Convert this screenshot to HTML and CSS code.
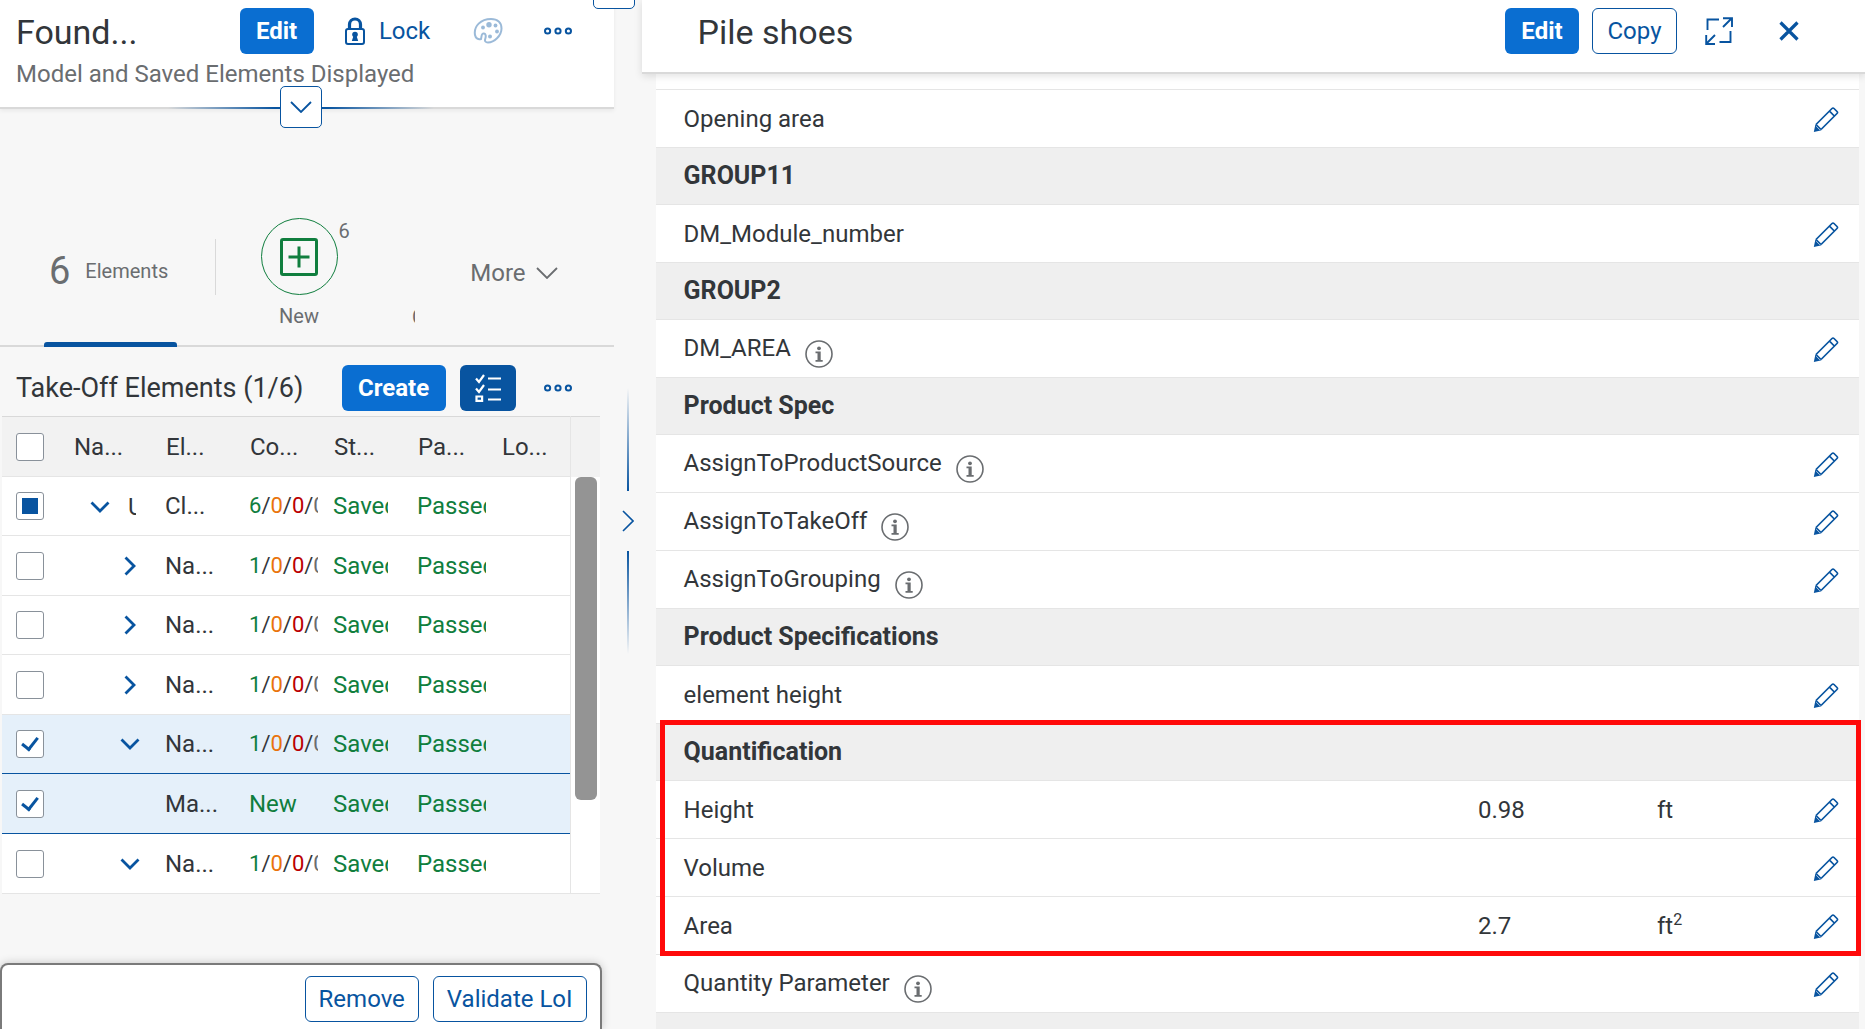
FILE: index.html
```
<!DOCTYPE html>
<html lang="en">
<head>
    <meta charset="UTF-8">
    <meta name="viewport" content="width=device-width, initial-scale=1.0">
    <title>Take-Off Elements</title>
    <link rel="stylesheet" href="styles.css">
</head>
<body>
    <svg class="sprite" aria-hidden="true">
        <symbol id="pencil" viewBox="0 0 26 26">
            <path d="M3 17.5 19 1.5q1-1 2 0L24 4.500q1 1 0 2L8 22.500M16.500 4.200l4.800 4.800M3 17.500l5 5" fill="none" stroke="currentColor" stroke-width="1.700"/>
            <path d="M2.500 17 .8 25l8-1.800-2.300-.4-3-3z" fill="currentColor"/>
        </symbol>
        <symbol id="info" viewBox="0 0 28 28">
            <circle cx="14" cy="14" r="13" fill="none" stroke="currentColor" stroke-width="1.600"/>
            <circle cx="14" cy="8.300" r="1.900" fill="currentColor"/>
            <path d="M10.500 11.500h5.200v8.500h2v1.800h-7.200V20h2v-6.700h-2z" fill="currentColor"/>
        </symbol>
        <symbol id="dots" viewBox="0 0 28 10">
            <g fill="none" stroke="currentColor" stroke-width="2"><circle cx="3.600" cy="5" r="2.600"/><circle cx="14" cy="5" r="2.600"/><circle cx="24.400" cy="5" r="2.600"/></g>
        </symbol>
        <symbol id="down" viewBox="0 0 22 12">
            <path d="m1 1 10 10L21 1" fill="none" stroke="currentColor" stroke-width="1.800"/>
        </symbol>
        <symbol id="open" viewBox="0 0 20 12">
            <path d="m1.500 1.500 8.500 8.500 8.500-8.500" fill="none" stroke="currentColor" stroke-width="2.800"/>
        </symbol>
        <symbol id="closed" viewBox="0 0 12 20">
            <path d="m1.500 1.500 8.500 8.500-8.500 8.500" fill="none" stroke="currentColor" stroke-width="2.800"/>
        </symbol>
    </svg>

    <div class="app">
        <main class="elements">
            <header class="elements-header">
                <div class="title-row">
                    <h1 class="title">Found...</h1>
                    <button type="button" class="btn primary">Edit</button>
                    <button type="button" class="btn plain lock">
                        <svg width="20" height="28" viewBox="0 0 20 28"><path d="M4.500 12V7.500a5.500 5.500 0 0 1 11 0V12" fill="none" stroke="currentColor" stroke-width="3.200"/><rect x="1" y="12" width="18" height="15" rx="2" fill="none" stroke="currentColor" stroke-width="2"/><circle cx="10" cy="17.500" r="2.800" fill="currentColor"/><path d="M8.800 18h2.400l2 6H6.800z" fill="currentColor"/></svg>
                        Lock
                    </button>
                    <button type="button" class="btn plain palette" aria-label="Colors" disabled>
                        <svg width="30" height="28" viewBox="0 0 30 28"><path d="M2 18C.5 9 8 2 18 2c6.500 0 10.500 3.500 10.500 9.500C28.500 19 21 25.500 15 25.500c-2.500 0-3.500-1.500-2.800-3.500 1-2.800.6-5.200-1.200-5.500-2.600-.4-2.200 2-3 5.500C5.500 23 2.600 21.500 2 18z" fill="none" stroke="currentColor" stroke-width="2"/><g fill="currentColor"><circle cx="10" cy="10.500" r="1.900"/><circle cx="16" cy="7.800" r="2.700"/><circle cx="22.500" cy="8.500" r="1.900"/><circle cx="24" cy="14.500" r="1.900"/><circle cx="17" cy="19.500" r="2"/></g></svg>
                    </button>
                    <button type="button" class="btn plain more" aria-label="More actions"><svg width="28" height="10"><use href="#dots"/></svg></button>
                </div>
                <p class="subtitle">Model and Saved Elements Displayed</p>
                <button type="button" class="expand" aria-label="Expand header"><svg width="22" height="12"><use href="#down"/></svg></button>
            </header>

            <nav class="tabs">
                <button type="button" class="tab total selected"><span class="number">6</span>Elements</button>
                <button type="button" class="tab new">
                    <span class="circle">
                        <svg width="38" height="38" viewBox="0 0 38 38"><rect x="1.500" y="1.500" width="35" height="35" rx="1.500" fill="none" stroke="currentColor" stroke-width="3"/><path d="M19 8.500v21M8.500 19h21" stroke="currentColor" stroke-width="3"/></svg>
                        <span class="count">6</span>
                    </span>
                    New
                </button>
                <button type="button" class="tab cut">Changed</button>
                <button type="button" class="tab overflow">More <svg width="22" height="12"><use href="#down"/></svg></button>
            </nav>

            <div class="toolbar">
                <h2 class="toolbar-title">Take-Off Elements (1/6)</h2>
                <button type="button" class="btn primary">Create</button>
                <button type="button" class="btn toggle" aria-label="Multi selection">
                    <svg width="26" height="28" viewBox="0 0 26 28"><g fill="none" stroke="currentColor" stroke-width="2.200"><path d="m1 4.500 3 3.500L9 1M1 14.500 4 18l5-7M13 4.500h13M13 15.500h13M13 25.500h13"/><path d="M1.500 22.500h5.600v4.400H1.500z"/></g></svg>
                </button>
                <button type="button" class="btn plain more" aria-label="More actions"><svg width="28" height="10"><use href="#dots"/></svg></button>
            </div>

            <div class="grid">
                <table class="tree">
                    <colgroup><col class="col-check"><col class="col-name"><col class="col-data"><col class="col-data"><col class="col-data"><col class="col-data"><col></colgroup>
                    <thead>
                        <tr><th class="check"><input type="checkbox" class="box" aria-label="Select all"></th><th>Na...</th><th>El...</th><th>Co...</th><th>St...</th><th>Pa...</th><th>Lo...</th></tr>
                    </thead>
                    <tbody>
                        <tr>
                            <td class="check"><input type="checkbox" class="box partial" aria-label="Select row"></td>
                            <td class="name root"><svg width="20" height="12"><use href="#open"/></svg><span class="clip">U</span></td>
                            <td>Cl...</td>
                            <td><span class="counts"><b class="good">6</b>/<b class="warn">0</b>/<b class="bad">0</b>/<b class="none">0</b></span></td>
                            <td><span class="saved">Saved</span></td><td><span class="passed">Passed</span></td><td></td>
                        </tr>
                        <tr>
                            <td class="check"><input type="checkbox" class="box" aria-label="Select row"></td>
                            <td class="name"><svg width="12" height="20"><use href="#closed"/></svg></td>
                            <td>Na...</td>
                            <td><span class="counts"><b class="good">1</b>/<b class="warn">0</b>/<b class="bad">0</b>/<b class="none">0</b></span></td>
                            <td><span class="saved">Saved</span></td><td><span class="passed">Passed</span></td><td></td>
                        </tr>
                        <tr>
                            <td class="check"><input type="checkbox" class="box" aria-label="Select row"></td>
                            <td class="name"><svg width="12" height="20"><use href="#closed"/></svg></td>
                            <td>Na...</td>
                            <td><span class="counts"><b class="good">1</b>/<b class="warn">0</b>/<b class="bad">0</b>/<b class="none">0</b></span></td>
                            <td><span class="saved">Saved</span></td><td><span class="passed">Passed</span></td><td></td>
                        </tr>
                        <tr>
                            <td class="check"><input type="checkbox" class="box" aria-label="Select row"></td>
                            <td class="name"><svg width="12" height="20"><use href="#closed"/></svg></td>
                            <td>Na...</td>
                            <td><span class="counts"><b class="good">1</b>/<b class="warn">0</b>/<b class="bad">0</b>/<b class="none">0</b></span></td>
                            <td><span class="saved">Saved</span></td><td><span class="passed">Passed</span></td><td></td>
                        </tr>
                        <tr class="selected">
                            <td class="check"><input type="checkbox" class="box" aria-label="Select row" checked></td>
                            <td class="name"><svg width="20" height="12"><use href="#open"/></svg></td>
                            <td>Na...</td>
                            <td><span class="counts"><b class="good">1</b>/<b class="warn">0</b>/<b class="bad">0</b>/<b class="none">0</b></span></td>
                            <td><span class="saved">Saved</span></td><td><span class="passed">Passed</span></td><td></td>
                        </tr>
                        <tr class="selected">
                            <td class="check"><input type="checkbox" class="box" aria-label="Select row" checked></td>
                            <td class="name"></td>
                            <td>Ma...</td>
                            <td><span class="good">New</span></td>
                            <td><span class="saved">Saved</span></td><td><span class="passed">Passed</span></td><td></td>
                        </tr>
                        <tr>
                            <td class="check"><input type="checkbox" class="box" aria-label="Select row"></td>
                            <td class="name"><svg width="20" height="12"><use href="#open"/></svg></td>
                            <td>Na...</td>
                            <td><span class="counts"><b class="good">1</b>/<b class="warn">0</b>/<b class="bad">0</b>/<b class="none">0</b></span></td>
                            <td><span class="saved">Saved</span></td><td><span class="passed">Passed</span></td><td></td>
                        </tr>
                    </tbody>
                </table>
                <div class="scroll"><div class="thumb"></div></div>
            </div>

            <footer class="footer">
                <button type="button" class="btn outline">Remove</button>
                <button type="button" class="btn outline">Validate LoI</button>
            </footer>
        </main>

        <div class="splitter">
            <div class="line top"></div>
            <svg width="12" height="22" viewBox="0 0 12 22"><path d="m1 1 10 10L1 21" fill="none" stroke="currentColor" stroke-width="1.600"/></svg>
            <div class="line bottom"></div>
        </div>

        <aside class="details">
            <header class="details-header">
                <h2 class="title">Pile shoes</h2>
                <button type="button" class="btn primary">Edit</button>
                <button type="button" class="btn outline">Copy</button>
                <button type="button" class="btn plain full" aria-label="Full screen"><svg width="28" height="28" viewBox="0 0 28 28"><path d="M18 1.200h9V10M26.500 1.500 18 10M10 27H1.200v-9M1.500 26.500 10 18M2.500 13V2.500H14M25.500 14v11H14.500" fill="none" stroke="currentColor" stroke-width="1.900"/></svg></button>
                <button type="button" class="btn plain close" aria-label="Close"><svg width="20" height="20" viewBox="0 0 20 20"><path d="m1.500 1.500 17 17m0-17-17 17" stroke="currentColor" stroke-width="3.200"/></svg></button>
            </header>
            <table class="props">
                <colgroup><col><col class="col-value"><col class="col-unit"><col class="col-edit"></colgroup>
                <tbody>
                    <tr class="rest"><td colspan="4"></td></tr>
                    <tr><td>Opening area</td><td></td><td></td><td><button type="button" class="edit" aria-label="Edit Opening area"><svg width="26" height="26"><use href="#pencil"/></svg></button></td></tr>
                    <tr class="group"><th colspan="4">GROUP11</th></tr>
                    <tr><td>DM_Module_number</td><td></td><td></td><td><button type="button" class="edit" aria-label="Edit DM_Module_number"><svg width="26" height="26"><use href="#pencil"/></svg></button></td></tr>
                    <tr class="group"><th colspan="4">GROUP2</th></tr>
                    <tr><td>DM_AREA<svg class="info" width="28" height="28"><use href="#info"/></svg></td><td></td><td></td><td><button type="button" class="edit" aria-label="Edit DM_AREA"><svg width="26" height="26"><use href="#pencil"/></svg></button></td></tr>
                    <tr class="group"><th colspan="4">Product Spec</th></tr>
                    <tr><td>AssignToProductSource<svg class="info" width="28" height="28"><use href="#info"/></svg></td><td></td><td></td><td><button type="button" class="edit" aria-label="Edit AssignToProductSource"><svg width="26" height="26"><use href="#pencil"/></svg></button></td></tr>
                    <tr><td>AssignToTakeOff<svg class="info" width="28" height="28"><use href="#info"/></svg></td><td></td><td></td><td><button type="button" class="edit" aria-label="Edit AssignToTakeOff"><svg width="26" height="26"><use href="#pencil"/></svg></button></td></tr>
                    <tr><td>AssignToGrouping<svg class="info" width="28" height="28"><use href="#info"/></svg></td><td></td><td></td><td><button type="button" class="edit" aria-label="Edit AssignToGrouping"><svg width="26" height="26"><use href="#pencil"/></svg></button></td></tr>
                    <tr class="group"><th colspan="4">Product Specifications</th></tr>
                    <tr><td>element height</td><td></td><td></td><td><button type="button" class="edit" aria-label="Edit element height"><svg width="26" height="26"><use href="#pencil"/></svg></button></td></tr>
                </tbody>
                <tbody class="highlight">
                    <tr class="group"><th colspan="4">Quantification</th></tr>
                    <tr><td>Height</td><td>0.98</td><td>ft</td><td><button type="button" class="edit" aria-label="Edit Height"><svg width="26" height="26"><use href="#pencil"/></svg></button></td></tr>
                    <tr><td>Volume</td><td></td><td></td><td><button type="button" class="edit" aria-label="Edit Volume"><svg width="26" height="26"><use href="#pencil"/></svg></button></td></tr>
                    <tr><td>Area</td><td>2.7</td><td>ft<sup>2</sup></td><td><button type="button" class="edit" aria-label="Edit Area"><svg width="26" height="26"><use href="#pencil"/></svg></button></td></tr>
                </tbody>
                <tbody>
                    <tr><td>Quantity Parameter<svg class="info" width="28" height="28"><use href="#info"/></svg></td><td></td><td></td><td><button type="button" class="edit" aria-label="Edit Quantity Parameter"><svg width="26" height="26"><use href="#pencil"/></svg></button></td></tr>
                    <tr class="group"><th colspan="4"></th></tr>
                </tbody>
            </table>
        </aside>

        <div class="float-tab"></div>
    </div>
</body>
</html>
```
FILE: styles.css
```
* {
    box-sizing: border-box;
}
body {
    margin: 0;
    font-family: Roboto, "Noto Sans", Arial, sans-serif;
    font-size: 24px;
    line-height: 28px;
    color: #32363a;
    background-color: #f7f7f7;
}
h1, h2, p {
    margin: 0;
    font-weight: normal;
}
button {
    font-family: inherit;
    font-size: 24px;
    line-height: 28px;
    padding: 0;
    border: none;
    background: none;
    color: #0854a0;
    cursor: pointer;
}
svg {
    display: block;
    flex: none;
}
sup {
    font-size: 16px;
    line-height: 0;
}
.sprite {
    position: absolute;
    width: 0;
    height: 0;
}
.app {
    position: relative;
    display: flex;
    height: 100vh;
    overflow: hidden;
}

/* buttons */
.btn {
    display: flex;
    align-items: center;
    justify-content: center;
    height: 46px;
    padding: 0 13px;
    border: 1px solid transparent;
    border-radius: 6px;
    flex: none;
}
.primary {
    background-color: #0a6ed1;
    color: #fff;
    font-weight: bold;
}
.outline {
    background-color: #fff;
    border-color: #0854a0;
}
.toggle {
    width: 56px;
    background-color: #0854a0;
    color: #fff;
}
.plain {
    padding: 0;
}
.more {
    width: 56px;
}

/* left side */
.elements {
    display: flex;
    flex-direction: column;
    width: 32.9%;
    flex: none;
}
.elements-header {
    position: relative;
    height: 109px;
    padding: 8px 28px 0 16px;
    background-color: #fff;
    border-bottom: 2px solid #d9d9d9;
    box-shadow: 0 2px 4px rgba(0,0,0,0.06);
}
.elements-header::after {
    content: "";
    position: absolute;
    left: 168px;
    bottom: -2px;
    width: 266px;
    height: 2px;
    background: linear-gradient(to right, transparent, #0854a0 40%, #0854a0 60%, transparent);
}
.title-row {
    display: flex;
    align-items: center;
    height: 46px;
}
.title {
    flex: 1;
    padding-top: 2px;
    font-size: 34px;
    line-height: 46px;
}
.title-row .primary {
    width: 74px;
}
.lock {
    width: 120px;
    gap: 14px;
    margin-left: 14px;
}
.palette {
    width: 56px;
    margin: 0 14px 0 12px;
    opacity: 0.4;
}
.subtitle {
    margin-top: 6px;
    color: #6a6d70;
}
.expand {
    position: absolute;
    z-index: 1;
    left: 280px;
    bottom: -21px;
    width: 42px;
    height: 42px;
    display: flex;
    align-items: center;
    justify-content: center;
    background-color: #fff;
    border: 1px solid #0854a0;
    border-radius: 5px;
}

.tabs {
    display: flex;
    height: 238px;
    padding: 109px 56px 0 44px;
    border-bottom: 2px solid #d9d9d9;
}
.tab {
    display: flex;
    align-items: center;
    font-size: 20px;
    color: #6a6d70;
}
.total {
    position: relative;
    width: 133px;
    height: 129px;
    padding: 0 0 24px 5px;
    gap: 15px;
}
.total::after {
    content: "";
    position: absolute;
    left: 0;
    bottom: 0;
    width: 100%;
    height: 5px;
    background-color: #0854a0;
    border-radius: 3px 3px 0 0;
}
.number {
    font-size: 38px;
}
.new {
    flex-direction: column;
    width: 168px;
    height: 128px;
    margin-left: 38px;
    gap: 7px;
    background: linear-gradient(#d9d9d9, #d9d9d9) 0 21px / 1px 56px no-repeat;
}
.circle {
    position: relative;
    display: flex;
    align-items: center;
    justify-content: center;
    width: 77px;
    height: 77px;
    border: 1px solid #107e3e;
    border-radius: 50%;
    color: #107e3e;
}
.count {
    position: absolute;
    left: 77px;
    top: -2px;
    color: #6a6d70;
}
.cut {
    width: 3px;
    height: 28px;
    margin: 85px 0 0 29px;
    overflow: hidden;
}
.overflow {
    height: 110px;
    margin-left: auto;
    gap: 10px;
    font-size: 24px;
}

.toolbar {
    display: flex;
    align-items: center;
    height: 69px;
    padding: 12px 28px 0 16px;
    gap: 14px;
}
.toolbar .primary {
    width: 104px;
}
.toolbar .more {
    width: 28px;
    margin: 0 14px;
}
.toolbar-title {
    flex: 1;
    font-size: 27px;
    white-space: nowrap;
}

/* elements table */
.grid {
    display: flex;
    margin: 0 14px 0 2px;
    border-bottom: 1px solid #e5e5e5;
}
.tree {
    flex: 1;
    table-layout: fixed;
    border-collapse: separate;
    border-spacing: 0;
    border-right: 1px solid #e5e5e5;
    background-color: #fff;
}
.col-check {
    width: 56px;
}
.col-name {
    width: 99px;
}
.col-data {
    width: 84px;
}
.tree th, .tree td {
    height: 60px;
    padding: 0 0 0 8px;
    border-bottom: 1px solid #e5e5e5;
    text-align: left;
    font-weight: normal;
    white-space: nowrap;
}
.tree tr:nth-child(odd) td {
    height: 59px;
}
.tree th {
    height: 61px;
    padding-left: 9px;
    border-top: 1px solid #d9d9d9;
    background-color: #f2f2f2;
}
.tree th:nth-child(2) {
    padding-left: 16px;
}
.tree .check {
    padding-left: 14px;
}
.tree .selected td {
    background-color: #e5f0fa;
    border-bottom-color: #0854a0;
}
.tree tr:last-child td {
    border-bottom: none;
}
.box {
    appearance: none;
    display: flex;
    align-items: center;
    justify-content: center;
    width: 28px;
    height: 28px;
    margin: 0;
    border: 1px solid #89919a;
    border-radius: 3px;
    background-color: #fff;
}
.partial::after {
    content: "";
    width: 16px;
    height: 16px;
    background-color: #0854a0;
}
.box:checked::after {
    content: "";
    width: 7px;
    height: 13px;
    margin-bottom: 4px;
    border: solid #0854a0;
    border-width: 0 3px 3px 0;
    transform: rotate(38deg);
}
.name svg {
    margin: 0 auto 0 66px;
    color: #0854a0;
}
.tree .name {
    padding-left: 0;
}
.name svg[width="20"] {
    margin-left: 62px;
}
.tree .root svg[width="20"] {
    display: inline-block;
    vertical-align: middle;
    margin: 0 18px 0 32px;
}
.clip {
    display: inline-block;
    vertical-align: middle;
    width: 8px;
    overflow: hidden;
}
.counts, .saved, .passed {
    display: block;
    width: 69px;
    overflow: hidden;
}
.saved {
    width: 55px;
}
.counts {
    font-size: 22px;
}
.counts b {
    font-weight: normal;
}
.good, .saved, .passed {
    color: #107e3e;
}
.warn {
    color: #e9730c;
}
.bad {
    color: #bb0000;
}
.none {
    color: #6a6d70;
}
.scroll {
    width: 29px;
    padding: 60px 3px 0 4px;
    background: linear-gradient(#f2f2f2, #f2f2f2) 0 0 / 100% 60px no-repeat #fff;
    border-top: 1px solid #d9d9d9;
}
.thumb {
    height: 323px;
    border-radius: 6px;
    background-color: #949494;
}

.footer {
    display: flex;
    justify-content: flex-end;
    gap: 14px;
    height: 66px;
    margin: auto 12px 0 0;
    padding: 11px 13px 0;
    background-color: #fff;
    border: 2px solid #7a7a7a;
    border-bottom: none;
    border-radius: 8px 8px 0 0;
    box-shadow: 0 0 10px rgba(0,0,0,0.2);
}

/* bar between the two sides */
.splitter {
    display: flex;
    flex-direction: column;
    align-items: center;
    justify-content: center;
    gap: 19px;
    width: 28px;
    padding-top: 13px;
    color: #0854a0;
    flex: none;
}
.line {
    width: 2px;
    height: 103px;
}
.top {
    background: linear-gradient(transparent, #0854a0);
}
.bottom {
    background: linear-gradient(#0854a0, transparent);
}
.float-tab {
    position: absolute;
    left: 593px;
    top: -10px;
    width: 42px;
    height: 19px;
    background-color: #fff;
    border: 1px solid #0854a0;
    border-radius: 5px;
}

/* right side */
.details {
    flex: 1;
    min-width: 0;
}
.details-header {
    position: relative;
    z-index: 1;
    display: flex;
    align-items: center;
    height: 74px;
    padding: 0 48px 10px 56px;
    background-color: #fff;
    border-bottom: 2px solid #d9d9d9;
    box-shadow: 0 2px 8px rgba(0,0,0,0.12);
}
.details-header .primary {
    width: 74px;
    margin-right: 13px;
}
.details-header .outline {
    width: 85px;
}
.full {
    width: 56px;
    margin: 0 14px;
}
.close {
    width: 56px;
}
.props {
    width: calc(100% - 20px);
    margin: 0 6px 0 14px;
    table-layout: fixed;
    border-collapse: separate;
    border-spacing: 0;
    background-color: #fff;
}
.col-value {
    width: 179px;
}
.col-unit {
    width: 156px;
}
.col-edit {
    width: 46px;
}
.props td, .props th {
    height: 58px;
    padding: 0;
    border-bottom: 1px solid #e5e5e5;
    text-align: left;
}
.props td:first-child, .props th {
    padding-left: 28px;
}
.props .group th {
    height: 57px;
    font-size: 25px;
    background-color: #efefef;
}
.props .rest td {
    height: 16px;
}
.info {
    display: inline-block;
    margin: 5px 0 -5px 14px;
    vertical-align: middle;
    color: #6a6d70;
}
.edit {
    display: block;
    padding-top: 2px;
}
.highlight {
    position: relative;
}
.highlight::after {
    content: "";
    position: absolute;
    top: -4px;
    right: -2px;
    bottom: -1px;
    left: 4px;
    border: 5px solid #ff0a0a;
    pointer-events: none;
}
```
